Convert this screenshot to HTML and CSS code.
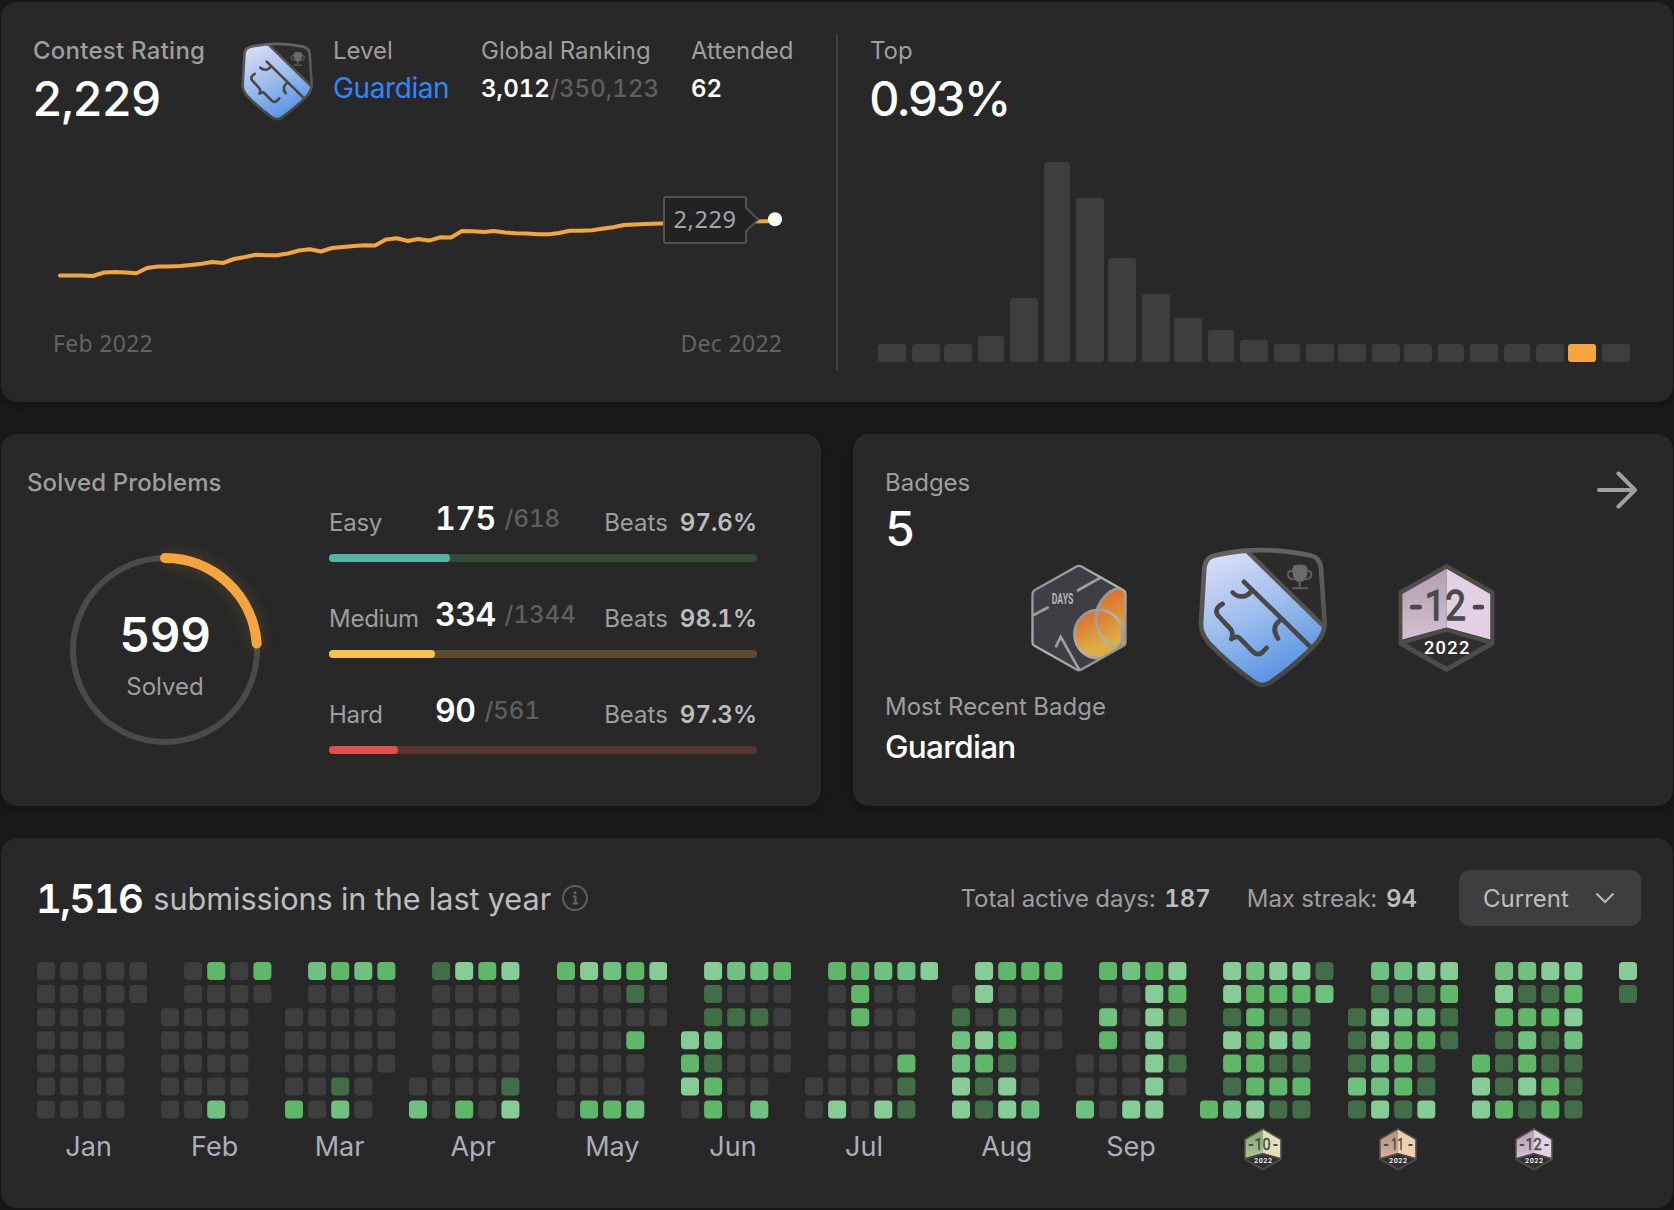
FILE: index.html
```html
<!DOCTYPE html>
<html lang="en">
<head>
<meta charset="utf-8">
<title>Profile</title>
<link rel="stylesheet" href="styles.css">
</head>
<body>
<svg class="defs" width="0" height="0" aria-hidden="true">
  <defs>
    <linearGradient id="blue" x1="0.15" y1="0" x2="0.6" y2="1">
      <stop offset="0" stop-color="#e0e0fa"/><stop offset="0.5" stop-color="#9dbdec"/><stop offset="1" stop-color="#5090e2"/>
    </linearGradient>
    <linearGradient id="rim" x1="0" y1="0" x2="0" y2="1">
      <stop offset="0" stop-color="#656261"/><stop offset="1" stop-color="#454544"/>
    </linearGradient>
    <linearGradient id="orange" x1="0.2" y1="0" x2="0.6" y2="1">
      <stop offset="0" stop-color="#dd6a2b"/><stop offset="0.75" stop-color="#dbad42"/>
    </linearGradient>
    <linearGradient id="metal" x1="0" y1="0" x2="1" y2="1">
      <stop offset="0" stop-color="#8a8a8a"/><stop offset="0.5" stop-color="#b4b4b4"/><stop offset="1" stop-color="#858585"/>
    </linearGradient>
    <linearGradient id="shade" x1="0" y1="0" x2="0" y2="1">
      <stop offset="0" stop-color="#000" stop-opacity="0.12"/><stop offset="1" stop-color="#fff" stop-opacity="0.15"/>
    </linearGradient>
    <clipPath id="hexclip"><path d="M144 5L284 82V243L144 320L4 243V82Z"/></clipPath>
    <clipPath id="shieldclip"><path d="M9 230L19 62Q22 32 50 25Q193 -7 339 25Q366 32 369 62L380 225Q381 258 356 287Q300 347 218 405Q193 422 169 405Q88 347 32 287Q8 258 9 230Z"/></clipPath>
    <symbol id="shield" viewBox="0 0 387 422">
      <g clip-path="url(#shieldclip)">
        <rect width="387" height="422" fill="#2d2c2a"/>
        <path d="M0 0H138L387 244V422H0Z" fill="url(#blue)"/>
        <path d="M145 10L380 240" stroke="#575554" stroke-width="13"/>
        <path d="M138 104L345 307" stroke="#484745" stroke-width="14" stroke-linecap="round"/>
      </g>
      <g fill="none" stroke="#484745" stroke-width="14" stroke-linecap="round" stroke-linejoin="round">
        <path d="M104 136Q118 151 140 147Q155 142 161 130"/>
        <path d="M247 219Q217 240 240 274"/>
        <path d="M74 170Q46 185 60 205L98 246Q107 256 100 276Q116 264 125 273L165 314Q180 326 191 317L206 302"/>
      </g>
      <g fill="none" stroke="#605e5c" stroke-width="6" stroke-linecap="round">
        <path d="M285 60Q285 52 305 52Q326 52 326 60L330 68L326 88Q321 104 305 105Q290 104 286 88L282 68Z" fill="#6d6b69" stroke="none"/>
        <path d="M282 72Q268 70 270 84Q273 97 290 96M328 72Q342 70 340 84Q337 97 320 96M305 103V121M284 123H327"/>
      </g>
      <path d="M9 230L19 62Q22 32 50 25Q193 -7 339 25Q366 32 369 62L380 225Q381 258 356 287Q300 347 218 405Q193 422 169 405Q88 347 32 287Q8 258 9 230Z" fill="none" stroke="url(#rim)" stroke-width="14"/>
    </symbol>
    <symbol id="month" viewBox="0 0 291 325">
      <path d="M145.5 8L283 86V239L145.5 317L8 239V86Z" fill="#2e2e2c" stroke="#4b4d49" stroke-width="15" stroke-linejoin="round"/>
      <path class="face-left" d="M13 90L145.5 14V191L13 227Z"/>
      <path d="M13 90L145.5 14V191L13 227Z" fill="url(#shade)"/>
      <path class="face-right" d="M145.5 14L277 90V227L145.5 191Z"/>
      <path d="M9 237L145.5 198L282 237" fill="none" stroke="#4b4d49" stroke-width="12"/>
      <path d="M42 130H65M231 130H252" stroke="#4a4a49" stroke-width="14" stroke-linecap="round"/>
    </symbol>
  </defs>
</svg>

<main class="page">
  <section class="card contest">
    <div class="rating">
      <div class="stats">
        <div><div class="label strong">Contest Rating</div><div class="big score">2,229</div></div>
        <svg class="shield-small" width="72" height="79"><use href="#shield"/></svg>
        <div><div class="label">Level</div><div class="level">Guardian</div></div>
        <div><div class="label">Global Ranking</div><div class="rank">3,012<span class="dim">/350,123</span></div></div>
        <div><div class="label">Attended</div><div class="rank">62</div></div>
      </div>
      <svg class="chart" width="802" height="239" viewBox="34 131 802 239">
        <polyline class="line" points="60,275.5 71,275.5 82,275.5 93,276 104,272.5 115,272 126,272.5 136.5,273.3 147,268 158,266.5 169,266.5 180,266 191,265 202,263.8 212,262 223,263 234,259 245,257 256,254.7 267,255.2 277,255.3 288,253.5 299,250.5 310,249.3 321,251.5 332,248 343,247 354,246 364,245.3 375,245.5 386,239.5 397,238.3 408,241 418,239 429,240.6 440,237.3 451,237.5 462,231 473,231.3 484,232 494,231 505,232.5 516,233.3 527,233.6 538,234.2 549,234.2 559,233 570,230.7 581,230.7 592,230.3 602,228.8 613,227.3 624,225 645,224 668,223.2 740,221.8 768,221.2"/>
        <path class="tip" d="M667 197H744Q746 197 746 199V207.500L758 219.500L746 231.500V241Q746 243 744 243H666Q664 243 664 241V199Q664 197 666 197Z"/>
        <circle cx="775" cy="219.300" r="7" fill="#fff"/>
        <text class="tip-text" x="673.500" y="228.300">2,229</text>
        <text class="date" x="53" y="352">Feb 2022</text>
        <text class="date" x="680.500" y="352">Dec 2022</text>
      </svg>
    </div>
    <div class="top">
      <div class="label">Top</div>
      <div class="big percent">0.93%</div>
      <svg class="chart" id="bars" width="772" height="239" viewBox="870 131 772 239"></svg>
    </div>
  </section>

  <div class="pair">
    <section class="card solved">
      <div class="label strong">Solved Problems</div>
      <div class="solved-body">
        <svg class="ring" width="200" height="200" viewBox="65 550 200 200">
          <circle cx="165" cy="650" r="92" fill="none" stroke="#4a4a4a" stroke-width="6"/>
          <path class="arc" d="M165 558A92 92 0 0 1 256.700 643.500"/>
          <text class="ring-num" x="165" y="652">599</text>
          <text class="ring-label" x="165" y="695">Solved</text>
        </svg>
        <div class="levels">
          <div>
            <div class="row"><span class="name">Easy</span><span class="count">175</span><span class="total">/618</span><span class="beats">Beats<b>97.6%</b></span></div>
            <div class="track easy"><i style="width:121px"></i></div>
          </div>
          <div>
            <div class="row"><span class="name">Medium</span><span class="count">334</span><span class="total">/1344</span><span class="beats">Beats<b>98.1%</b></span></div>
            <div class="track medium"><i style="width:106px"></i></div>
          </div>
          <div>
            <div class="row"><span class="name">Hard</span><span class="count">90</span><span class="total">/561</span><span class="beats">Beats<b>97.3%</b></span></div>
            <div class="track hard"><i style="width:69px"></i></div>
          </div>
        </div>
      </div>
    </section>

    <section class="card badges">
      <div class="badges-head">
        <div><div class="label">Badges</div><div class="big five">5</div></div>
        <svg class="arrow" width="42" height="40" viewBox="0 0 42 40"><path d="M4 20H39M23.500 3.500L40 20L23.500 36.500"/></svg>
      </div>
      <div class="badge-row">
        <svg width="96" height="108" viewBox="0 0 288 325">
          <path d="M144 5L284 82V243L144 320L4 243V82Z" fill="#3e3f45"/>
          <g clip-path="url(#hexclip)">
            <circle cx="290" cy="163" r="95" fill="url(#orange)"/>
            <circle cx="203" cy="211" r="73" fill="url(#orange)"/>
            <g fill="none" stroke="url(#metal)" stroke-width="8">
              <circle cx="290" cy="163" r="95"/>
              <circle cx="203" cy="211" r="73"/>
            </g>
          </g>
          <g fill="none" stroke="#a0a0a0" stroke-width="8" stroke-linecap="round">
            <path d="M141 79L209 41M7 154L50 131M75 248L89 219L144 317"/>
          </g>
          <path d="M138 7Q144 4 150 7L278 79Q284 83 284 90V236Q284 243 278 246L150 318Q144 321 138 318L10 246Q4 243 4 236V90Q4 83 10 79Z" fill="none" stroke="url(#metal)" stroke-width="7"/>
          <text class="days" x="62" y="121" textLength="65" lengthAdjust="spacingAndGlyphs">DAYS</text>
        </svg>
        <svg width="129" height="141"><use href="#shield"/></svg>
        <svg class="m12" width="97" height="108" viewBox="0 0 291 325"><use href="#month"/><text class="m-num" x="142" y="168" textLength="124" lengthAdjust="spacingAndGlyphs">12</text><text class="m-year" x="146" y="271" textLength="137">2022</text></svg>
      </div>
      <div class="label">Most Recent Badge</div>
      <div class="recent">Guardian</div>
    </section>
  </div>

  <section class="card activity">
    <div class="activity-head">
      <div class="submissions"><b>1,516</b><span>submissions in the last year</span>
        <svg width="26" height="26" viewBox="0 0 26 26"><circle cx="13" cy="13" r="12" fill="none" stroke="#5f5f5f" stroke-width="2"/><path d="M11 11.500H13.500V18M10.500 18.500H16" fill="none" stroke="#666" stroke-width="2"/><circle cx="13" cy="7.800" r="1.500" fill="#666"/></svg>
      </div>
      <div class="streak">Total active days:<b>187</b></div>
      <div class="streak max">Max streak:<b>94</b></div>
      <div class="select"><span>Current</span><svg width="20" height="12" viewBox="0 0 20 12"><path d="M1.500 1.500L10 10L18.500 1.500" fill="none" stroke="#bdbdbf" stroke-width="2"/></svg></div>
    </div>
    <div class="months" id="months"></div>
  </section>
</main>
<script src="charts.js"></script>
</body>
</html>
```
FILE: styles.css
```css
* { box-sizing: border-box; }
body {
  margin: 0;
  background: #1a1a1a;
  font-family: Inter, "Liberation Sans", sans-serif;
  font-variant-numeric: tabular-nums;
  color: #fff;
  width: 1674px;
  height: 1210px;
  overflow: hidden;
}
.defs { display: block; height: 0; }
.page { padding: 2px 1px; display: flex; flex-direction: column; gap: 32px; }
.card {
  background: #282828;
  border-radius: 16px;
  box-shadow: 0 4px 12px rgba(0, 0, 0, 0.35);
}
svg { display: block; flex: none; }
b { font-weight: 600; }
text { font-family: Inter, "Liberation Sans", sans-serif; }

.label { height: 32px; padding-top: 1px; font-size: 24px; line-height: 32px; color: #9e9e9f; white-space: nowrap; }
.label.strong { font-weight: 500; letter-spacing: 0.12px; }
.big { font-size: 47.5px; line-height: 65px; font-weight: 500; white-space: nowrap; }
.big.score { letter-spacing: -1.6px; margin-left: -2px; }
.big.percent { letter-spacing: -2.5px; margin-left: -1px; }

/* contest rating */
.contest { height: 400px; padding: 32px 31px 32px 33px; display: flex; }
.rating { width: 804px; border-right: 2px solid #3f3f3f; }
.stats { display: grid; grid-template-columns: 207px 92px 148px 210px auto; height: 97px; }
.stats .strong { margin-left: -1px; letter-spacing: 0.25px; }
.shield-small { margin-top: 8px; }
.level { font-size: 28px; line-height: 44px; letter-spacing: -0.4px; color: #3384ff; }
.rank { font-size: 24px; line-height: 46px; font-weight: 600; letter-spacing: 0.08px; }
.dim { color: #5f5f61; font-weight: 500; }
.line { fill: none; stroke: #f5a53d; stroke-width: 4; stroke-linejoin: round; stroke-linecap: round; }
.tip { fill: #202224; stroke: #4f5153; stroke-width: 2; }
.tip-text { font-family: "Noto Sans", sans-serif; font-size: 23.5px; letter-spacing: 0.6px; fill: #a5a5a5; }
.date { font-family: "Noto Sans", sans-serif; font-size: 23px; letter-spacing: 0.3px; fill: #636364; }
.top { padding-left: 32px; }
.bar { fill: #3e3e3e; }
.bar.you { fill: #f5a53d; }

/* solved problems and badges */
.pair { display: grid; grid-template-columns: 820px 820px; gap: 32px; height: 372px; }
.solved { padding: 32px 26px; }
.solved-body { display: flex; }
.ring { margin: 52px 64px 0 38px; overflow: visible; }
.arc { fill: none; stroke: #f5a53d; stroke-width: 10; stroke-linecap: round; filter: drop-shadow(0 0 8px rgba(245, 165, 61, 0.22)); }
.ring text { text-anchor: middle; }
.ring-num { font-size: 47.5px; font-weight: 600; letter-spacing: -0.4px; fill: #fff; }
.ring-label { font-size: 24px; fill: #9e9e9f; }
.levels { width: 428px; display: flex; flex-direction: column; gap: 32px; }
.row { display: flex; height: 56px; font-size: 24px; color: #9e9e9f; white-space: nowrap; }
.row span { line-height: 49px; }
.row .name { width: 106px; letter-spacing: -0.25px; }
.row .count { font-size: 32px; line-height: 41px; font-weight: 600; letter-spacing: -0.5px; color: #fff; margin-right: 9px; }
.row .total { line-height: 41px; font-weight: 500; color: #5f5f61; }
.row .beats { margin-left: auto; }
.row b { margin-left: 12px; color: #bdbdbf; }
.track { height: 8px; border-radius: 4px; }
.track i { display: block; height: 8px; border-radius: 4px; }
.easy { background: #364b36; } .easy i { background: #52b5a5; }
.medium { background: #5c4c2d; } .medium i { background: #f7c34b; }
.hard { background: #573331; } .hard i { background: #df524b; }

.badges { padding: 32px; }
.badges-head { display: flex; justify-content: space-between; height: 80px; }
.five { line-height: 62px; }
.arrow { margin: 4px 4px 0 0; fill: none; stroke: #a0a0a1; stroke-width: 4; stroke-linecap: round; stroke-linejoin: round; }
.badge-row { display: flex; justify-content: center; align-items: center; gap: 71px; height: 144px; padding-bottom: 1px; }
.recent { font-size: 31.5px; line-height: 49px; font-weight: 500; letter-spacing: -0.7px; }
.days { font: 700 42px Roboto, sans-serif; fill: #b5b5b5; }
.m-num { font: 400 130px Roboto, sans-serif; fill: #4a4a49; stroke: #4a4a49; stroke-width: 4; stroke-linejoin: round; text-anchor: middle; }
.m-year { font: 500 55px Roboto, sans-serif; fill: #fff; text-anchor: middle; }
.m10 { --l: #9dbc85; --r: #e4dfb8; }
.m11 { --l: #cfa48b; --r: #efcfae; }
.m12 { --l: #cbb5cb; --r: #e3d0e4; }
.face-left { fill: var(--l); }
.face-right { fill: var(--r); }

/* submission activity */
.activity { height: 370px; padding: 32px 32px 0 35px; }
.activity-head { display: flex; align-items: center; height: 56px; }
.submissions { display: flex; align-items: center; font-size: 30.6px; color: #bdbdbf; white-space: nowrap; }
.submissions b { font-size: 40px; letter-spacing: -1.6px; color: #fff; margin-right: 11px; }
.submissions svg { margin-left: 11px; }
.streak { margin-left: auto; font-size: 24px; letter-spacing: -0.1px; color: #9e9e9f; white-space: nowrap; }
.streak b { color: #bdbdbf; margin-left: 9px; letter-spacing: 0; }
.streak.max { margin-left: 36px; }
.select { margin-left: 42px; width: 182px; height: 56px; padding: 0 26px 0 24px; border-radius: 10px; background: #3e3e3e; display: flex; align-items: center; justify-content: space-between; font-size: 24px; color: #bdbdbf; }
.months { display: flex; gap: 13.75px; margin: 36px 0 0 1px; }
.month-label { height: 60px; padding-top: 7px; display: flex; justify-content: center; font-size: 27px; line-height: 42px; color: #abafba; }
.month-label svg { margin-top: 2px; }
.l0 { fill: #3e3e3e; }
.l1 { fill: #416e47; }
.l2 { fill: #5fb868; }
.l3 { fill: #6fc180; }
.l4 { fill: #85cd95; }
```
FILE: charts.js
```js
const rect = (x, y, w, h, r, cls) =>
  `<rect class="${cls}" x="${x}" y="${y}" width="${w}" height="${h}" rx="${r}"/>`;

// Rating distribution: [left, width, height]
const bars = [
  [878, 28, 18], [912, 28, 18], [944, 28, 18], [978, 26, 26], [1010, 28, 64], [1044, 26, 200],
  [1076, 28, 164], [1108, 28, 104], [1142, 28, 68], [1174, 28, 44], [1208, 26, 32], [1240, 28, 22],
  [1274, 26, 18], [1306, 28, 18], [1338, 28, 18], [1372, 28, 18], [1404, 28, 18], [1438, 26, 18],
  [1470, 28, 18], [1504, 26, 18], [1536, 28, 18], [1568, 28, 18], [1602, 28, 18]
];
document.getElementById('bars').innerHTML = bars
  .map(([x, w, h], i) => rect(x, 362 - h, w, h, 3, i === 21 ? 'bar you' : 'bar')).join('');

// Seven weekday rows per month; "." is a day outside the month, 0-4 the activity level
const months = [
  ['Jan', -3.6, '00000 00000 0000. 0000. 0000. 0000. 0000.'],
  ['Feb', -1.7, '.0202 .0000 0000. 0000. 0000. 0000. 0030.'],
  ['Mar', -0.9, '.3232 .0000 00000 00000 00000 0010. 2030.'],
  ['Apr', -3.1, '.1424. .0000. .0000. .0000. .0000. 00001. 30204.'],
  ['May', 0.5, '24324 00010 00000 0002. 0000. 0000. 0223.'],
  ['Jun', -3, '.4332 .1000 .1110 43000 21000 4200. 0203.'],
  ['Jul', -7.7, '.22334 .0200. .0200. .0000. .0002. 00001. 04041.'],
  ['Aug', -0.6, '.4222 04000 10100 34200 3210. 4140. 4143.'],
  ['Sep', -0.5, '.2324 .0042 .3041 .2040 00041 00040 3044.'],
  ['10', -4.6, '.43441 .42223 .1211. .4243. .2211. .1222. 23411.'],
  ['11', -4.7, '.3344 .1112 14331 14221 1321. 3321. 1414.'],
  ['12', -4.3, '.3344. .4112. .2224. .1313. 21211. 41421. 42121.'],
  ['', 0, '4 1 . . . . .']
];
const STEP = 23.1, CELL = 18;
document.getElementById('months').innerHTML = months.map(([name, shift, data]) => {
  const rows = data.split(' ');
  const width = (rows[0].length - 1) * STEP + CELL;
  const cells = rows.map((row, y) => [...row].map((c, x) =>
    c === '.' ? '' : rect((x * STEP).toFixed(1), (y * STEP).toFixed(1), CELL, CELL, 4, 'l' + c)).join('')).join('');
  const label = /^\d/.test(name)
    ? `<svg class="m${name}" width="38" height="42.500" viewBox="0 0 291 325"><use href="#month"/>` +
      `<text class="m-num" x="142" y="168" textLength="${name === '11' ? 96 : 124}" lengthAdjust="spacingAndGlyphs">${name}</text>` +
      `<text class="m-year" x="146" y="271" textLength="137">2022</text></svg>`
    : name;
  return `<div class="month"><svg width="${width}" height="157">${cells}</svg>` +
    `<div class="month-label" style="margin-left:${2 * shift}px">${label}</div></div>`;
}).join('');
```
